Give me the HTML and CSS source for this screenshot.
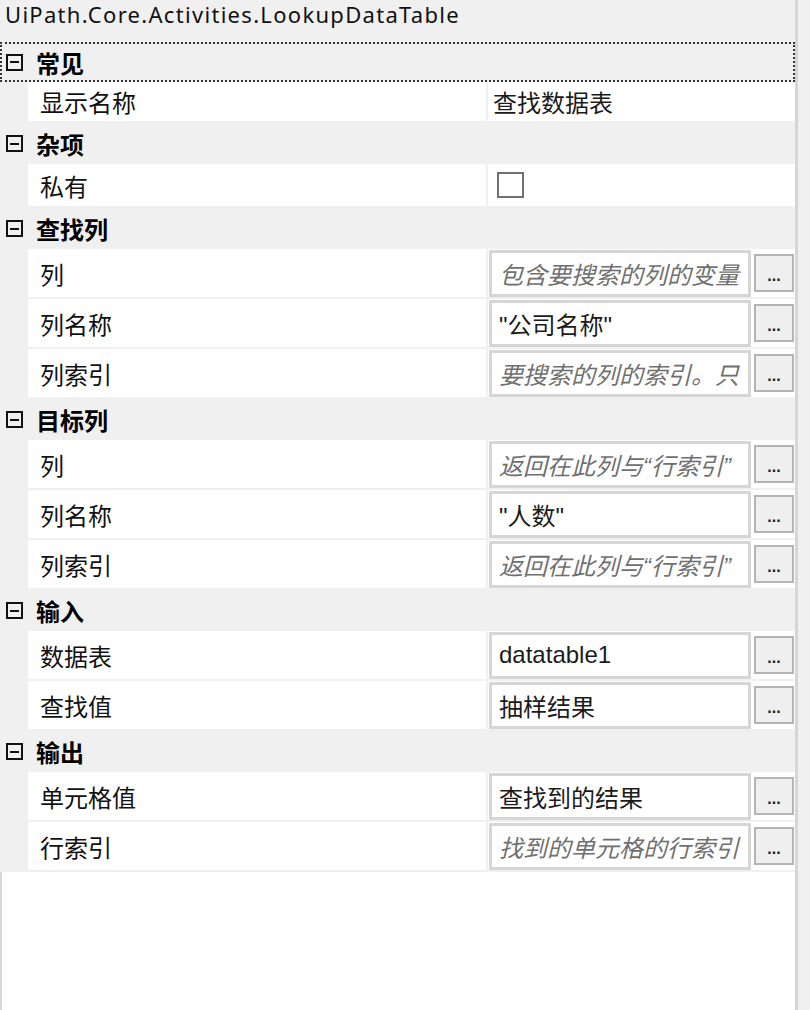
FILE: index.html
```html
<!DOCTYPE html>
<html lang="zh-CN">
<head>
<meta charset="utf-8">
<title>Properties</title>
<link rel="stylesheet" href="styles.css">
</head>
<body>
<div class="window">
  <div class="main">
    <div class="title">UiPath.Core.Activities.LookupDataTable</div>
    <div class="grid">
      <div class="cat focus"><span class="exp"></span><span class="cat-label">常见</span></div>
      <div class="prop h41"><div class="name">显示名称</div><div class="val text">查找数据表</div></div>

      <div class="cat"><span class="exp"></span><span class="cat-label">杂项</span></div>
      <div class="prop h44"><div class="name">私有</div><div class="val"><span class="chk"></span></div></div>

      <div class="cat"><span class="exp"></span><span class="cat-label">查找列</span></div>
      <div class="prop ed"><div class="name">列</div><div class="val"><div class="tb ph">包含要搜索的列的变量</div><div class="btn">...</div></div></div>
      <div class="prop ed"><div class="name">列名称</div><div class="val"><div class="tb">"公司名称"</div><div class="btn">...</div></div></div>
      <div class="prop ed"><div class="name">列索引</div><div class="val"><div class="tb ph">要搜索的列的索引。只</div><div class="btn">...</div></div></div>

      <div class="cat"><span class="exp"></span><span class="cat-label">目标列</span></div>
      <div class="prop ed"><div class="name">列</div><div class="val"><div class="tb ph">返回在此列与“行索引”</div><div class="btn">...</div></div></div>
      <div class="prop ed"><div class="name">列名称</div><div class="val"><div class="tb">"人数"</div><div class="btn">...</div></div></div>
      <div class="prop ed"><div class="name">列索引</div><div class="val"><div class="tb ph">返回在此列与“行索引”</div><div class="btn">...</div></div></div>

      <div class="cat"><span class="exp"></span><span class="cat-label">输入</span></div>
      <div class="prop ed"><div class="name">数据表</div><div class="val"><div class="tb">datatable1</div><div class="btn">...</div></div></div>
      <div class="prop ed"><div class="name">查找值</div><div class="val"><div class="tb">抽样结果</div><div class="btn">...</div></div></div>

      <div class="cat"><span class="exp"></span><span class="cat-label">输出</span></div>
      <div class="prop ed"><div class="name">单元格值</div><div class="val"><div class="tb">查找到的结果</div><div class="btn">...</div></div></div>
      <div class="prop ed"><div class="name">行索引</div><div class="val"><div class="tb ph">找到的单元格的行索引</div><div class="btn">...</div></div></div>
    </div>
    <div class="empty"></div>
  </div>
  <div class="vscroll"></div>
</div>
</body>
</html>
```
FILE: styles.css
```css
* { box-sizing: border-box; }
html, body { margin: 0; padding: 0; }
body {
  font-family: "Liberation Sans", "Noto Sans CJK SC", sans-serif;
  color: #111;
  background: #f0f0f0;
}
.window {
  display: flex;
  width: 810px;
  height: 1010px;
  background: #f0f0f0;
  overflow: hidden;
}
.main {
  flex: 1;
  display: flex;
  flex-direction: column;
  min-width: 0;
}
.title {
  height: 42px;
  padding-left: 5px;
  font-family: "Noto Sans", "Noto Sans CJK SC", sans-serif;
  font-size: 22px;
  letter-spacing: 1.3px;
  line-height: 28px;
  color: #111;
  white-space: nowrap;
}
.grid {
  background: #f0f0f0;
  display: flex;
  flex-direction: column;
}
.cat {
  height: 41px;
  display: flex;
  align-items: center;
  font-size: 24px;
  font-weight: bold;
  color: #000;
}
.cat.focus {
  height: 40px;
  border: 2px dotted #333;
}
.exp {
  width: 17px;
  height: 17px;
  margin-left: 6px;
  border: 2px solid #111;
  display: flex;
  align-items: center;
  justify-content: center;
  flex: none;
}
.focus .exp { margin-left: 4px; }
.exp::before {
  content: "";
  width: 9px;
  height: 2px;
  background: #111;
}
.cat-label { margin-left: 13px; }
.prop {
  display: flex;
  margin-left: 28px;
  border-bottom: 2px solid #f0f0f0;
  font-size: 24px;
}
.h41 { height: 41px; }
.h44 { height: 44px; }
.ed { height: 50px; }
.name {
  width: 458px;
  flex: none;
  background: #fff;
  padding-left: 12px;
  display: flex;
  align-items: center;
  color: #111;
}
.val {
  flex: 1;
  margin-left: 2px;
  background: #fff;
  display: flex;
  align-items: center;
  min-width: 0;
}
.val.text { padding-left: 5px; color: #1b1b1b; }
.chk {
  width: 27px;
  height: 26px;
  margin-left: 9px;
  border: 2px solid #707070;
  background: #fff;
}
.tb {
  width: 262px;
  height: 47px;
  margin-left: 1px;
  border: 3px solid #d6d6d6;
  background: #fff;
  padding-left: 7px;
  display: flex;
  align-items: center;
  white-space: nowrap;
  overflow: hidden;
  color: #1b1b1b;
  flex: none;
}
.tb.ph {
  font-style: italic;
  color: #707070;
}
.btn {
  width: 40px;
  height: 38px;
  margin-left: 3px;
  border: 2px solid #b4b4b4;
  background: #efefef;
  display: flex;
  justify-content: center;
  align-items: flex-end;
  padding-bottom: 6px;
  font-size: 16px;
  line-height: 16px;
  font-weight: bold;
  color: #222;
  flex: none;
}
.empty {
  flex: 1;
  background: #fff;
  border-left: 2px solid #d8d8d8;
}
.vscroll {
  width: 15px;
  flex: none;
  background: #f0f0f0;
  border-left: 3px solid #d6d6d6;
}
```
